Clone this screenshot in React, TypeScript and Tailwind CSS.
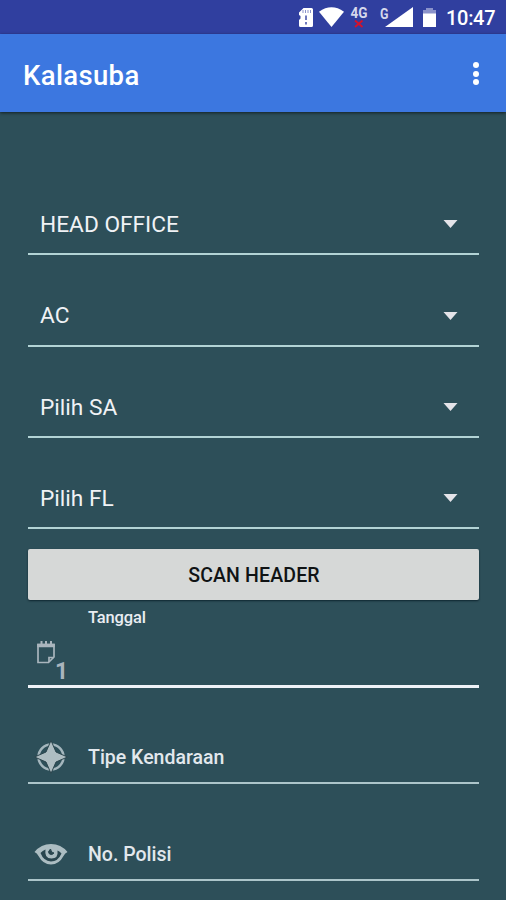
import type { ReactNode } from "react";

const spinners = [
  { label: "HEAD OFFICE", height: "h-[92px]" },
  { label: "AC", height: "h-[91.500px]" },
  { label: "Pilih SA", height: "h-[91.500px]" },
  { label: "Pilih FL", height: "h-[91px]" },
];

const StatusBar = () => {
  return <div className="flex h-[34px] items-center bg-[#303f9f] pl-[298px] text-white">
      <svg width="148" height="34" viewBox="298 0 148 34" className="shrink-0" fill="#fff">
        {/* SD card */}
        <path d="M303.500 8H311.500Q313 8 313 9.500V25.500Q313 27 311.500 27H300.500Q299 27 299 25.500V20L300.500 18.500V16L299 15V12.500Z" />
        <path d="M303 10V13M305.500 10V13M308 10V13M310.500 10V13" stroke="#8b93ca" strokeWidth="1" />
        <path d="M306 15.500V20M306 22V24.500" stroke="#6f79bd" strokeWidth="2" />
        {/* Wifi */}
        <path d="M319 11.700Q331.500 2.800 344 11.700L331.500 27Z" />
        {/* Mobile data */}
        <text x="350.500" y="18" fontFamily="Roboto, sans-serif" fontSize="14.500" fontWeight="700" fill="#d5d8ec" textLength="17" lengthAdjust="spacingAndGlyphs">4G</text>
        <path d="M355 20.500L362.500 27M362.500 20.500L355 27" stroke="#d3122c" strokeWidth="2" />
        <text x="380" y="19" fontFamily="Roboto, sans-serif" fontSize="14.500" fontWeight="700" fill="#d5d8ec" textLength="8.500" lengthAdjust="spacingAndGlyphs">G</text>
        <path d="M413 7V27H385Z" />
        {/* Battery */}
        <path d="M426 8H433V10H436V14H423V10H426Z" fill="#8a92ca" />
        <path d="M423 13.500H436V27H423Z" />
      </svg>
      <span className="pt-[2px] text-[20px] leading-none font-medium tracking-[-0.3px]">10:47</span>
    </div>;
};

const AppBar = () => {
  return <header className="relative flex h-[78px] items-center justify-between bg-[#3c77e0] pr-[26px] pl-[23px] text-white shadow-[0_1px_3px_rgba(0,0,0,0.6)]">
      <h1 className="pt-[5px] text-[27.500px] leading-none font-medium tracking-[0.35px]">Kalasuba</h1>
      <button className="flex w-2 flex-col items-center gap-[2.500px] pt-[1px]" aria-label="Menu">
        <span className="size-[6px] rounded-full bg-white"></span>
        <span className="size-[6px] rounded-full bg-white"></span>
        <span className="size-[6px] rounded-full bg-white"></span>
      </button>
    </header>;
};

const Spinner = ({ label, height }: { label: string; height: string }) => {
  return <div className={`flex flex-col justify-end ${height}`}>
      <div className="flex h-[58px] items-center justify-between pr-[21px] pl-[12px]">
        <span className="pt-[2px] text-[22.700px] leading-none text-[#f0f2f5]">{label}</span>
        <svg width="15" height="8" viewBox="0 0 15 8">
          <path d="M0.500 0H14.500L7.500 8Z" fill="#e4e4e9" />
        </svg>
      </div>
      <div className="h-[2px] bg-[#b2d3d5]"></div>
    </div>;
};

const CalendarIcon = () => {
  return <svg width="34" height="40" viewBox="0 0 34 40" className="overflow-visible" fill="none" stroke="#a9b5bd">
      <path d="M10 4.500H26V17L20.500 22.500H10Z" strokeWidth="1.700" />
      <path d="M9.200 5.500H26.800" strokeWidth="3.500" />
      <path d="M13.500 1V4M18 1V4M23 1V4" strokeWidth="2" />
      <path d="M25.500 17.500H21V22" strokeWidth="1.700" />
      <text x="27" y="39" fontFamily="Roboto, sans-serif" fontSize="23" fontWeight="700" fill="#a9b5bd" stroke="none">1</text>
    </svg>;
};

const CompassIcon = () => {
  return <svg width="34" height="34" viewBox="0 0 34 34">
      <circle cx="17" cy="17" r="12.500" fill="none" stroke="#a4b6bd" strokeWidth="2.500" />
      <path d="M17 0.500L22 12L33.500 17L22 22L17 33.500L12 22L0.500 17L12 12Z" fill="#aebdc2" stroke="#2b454d" strokeWidth="1" />
    </svg>;
};

const EyeIcon = () => {
  return <svg width="34" height="24" viewBox="0 0 34 24">
      <path d="M0.500 10Q7 2 17 2Q27 2 33.500 10Q31 11 29.500 14Q25 22.500 17 22.500Q9 22.500 4.500 14Q3 11 0.500 10Z" fill="#acbdc2" />
      <path d="M6.500 11Q8.500 8.500 11.500 7.500Q10 16.500 17.500 16.500Q24.500 16.500 23.500 8.500Q26 9.500 27.500 11.500Q24 19.500 17 19.500Q9.500 19 6.500 11Z" fill="#29454e" />
      <path d="M16.500 7Q13 10 15.500 12Q18 13.500 20 11Q17 11 16.500 7Z" fill="#29454e" stroke="#29454e" />
    </svg>;
};

const Field = ({ label, icon }: { label: string; icon: ReactNode }) => {
  return <div className="flex h-[97px] flex-col justify-end">
      <div className="flex h-[50px] items-center">
        <div className="flex w-[60px] justify-start pl-[6px]">{icon}</div>
        <span className="pt-[2px] text-[19.500px] leading-none font-medium text-[#e2e8ed]">{label}</span>
      </div>
      <div className="h-[2px] bg-[#acc5ca]"></div>
    </div>;
};

export default function App() {
  return <main className="h-[900px] w-[506px] overflow-hidden bg-[#2d4f59] font-[Roboto,sans-serif]">
      <StatusBar />
      <AppBar />
      <form className="flex flex-col pt-[51px] pr-[27px] pl-[28px]">
        {spinners.map((item) => <Spinner key={item.label} {...item} />)}

        <button type="button" className="mt-5 h-[51px] rounded-[2px] bg-[#d6d8d7] pt-[3px] pl-[1px] text-[19.500px] leading-none font-medium tracking-[0.15px] text-[#101314] shadow-[0_1px_2px_rgba(0,20,30,0.7)]">
          SCAN HEADER
        </button>

        {/* Date */}
        <div className="flex h-[88px] flex-col border-b-[3px] border-[#eef2f7] pt-[10px]">
          <span className="pl-[60px] text-[16.500px] leading-none font-medium tracking-[-0.15px] text-[#e9edf2]">Tanggal</span>
          <div className="mt-[13px]">
            <CalendarIcon />
          </div>
        </div>

        <div className="-mt-[1px]">
          <Field label="Tipe Kendaraan" icon={<CompassIcon />} />
          <Field label="No. Polisi" icon={<EyeIcon />} />
        </div>
      </form>
    </main>;
}
